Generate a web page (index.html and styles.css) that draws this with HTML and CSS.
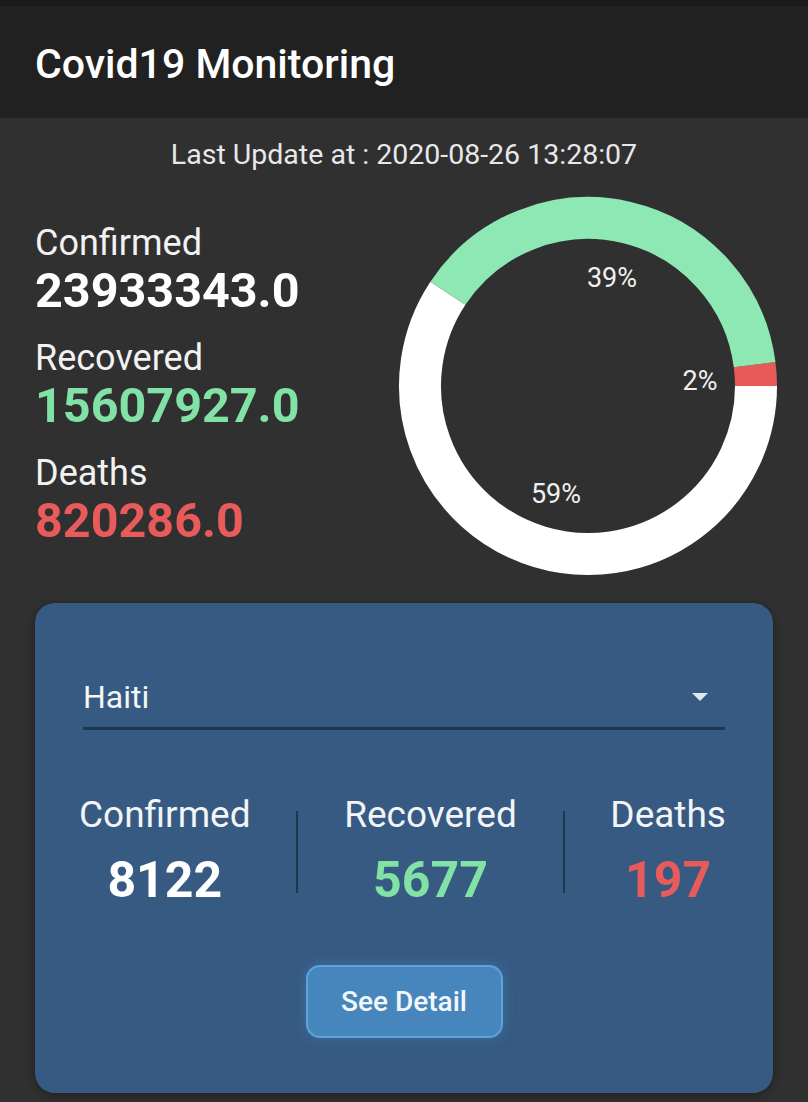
FILE: index.html
```html
<!DOCTYPE html>
<html lang="en">
<head>
<meta charset="utf-8">
<title>Covid19 Monitoring</title>
<link rel="stylesheet" href="styles.css">
</head>
<body>
<div class="status"></div>
<header class="appbar">
  <h1 class="title">Covid19 Monitoring</h1>
</header>
<main class="content">
  <p class="updated">Last Update at : 2020-08-26 13:28:07</p>
  <section class="overview">
    <div class="totals">
      <div class="total">
        <span class="label">Confirmed</span>
        <span class="value">23933343.0</span>
      </div>
      <div class="total">
        <span class="label">Recovered</span>
        <span class="value green">15607927.0</span>
      </div>
      <div class="total">
        <span class="label">Deaths</span>
        <span class="value red">820286.0</span>
      </div>
    </div>
    <svg class="donut" width="380" height="380" viewBox="0 0 380 380">
      <path class="seg seg-white" d="M 49.91 97.27 A 168 168 0 1 0 358 190"/>
      <path class="seg seg-red" d="M 358 190 A 168 168 0 0 0 356.63 168.60"/>
      <path class="seg seg-green" d="M 356.63 168.60 A 168 168 0 0 0 49.91 97.27"/>
      <text class="pct" x="214" y="91">39%</text>
      <text class="pct" x="302" y="194">2%</text>
      <text class="pct" x="158" y="307">59%</text>
    </svg>
  </section>
  <section class="card">
    <div class="select">
      <span class="select-value">Haiti</span>
      <span class="caret"></span>
    </div>
    <div class="stats">
      <div class="stat">
        <span class="stat-label">Confirmed</span>
        <span class="stat-value">8122</span>
      </div>
      <div class="divider"></div>
      <div class="stat">
        <span class="stat-label">Recovered</span>
        <span class="stat-value green">5677</span>
      </div>
      <div class="divider"></div>
      <div class="stat">
        <span class="stat-label">Deaths</span>
        <span class="stat-value red">197</span>
      </div>
    </div>
    <div class="actions">
      <button class="detail" type="button">See Detail</button>
    </div>
  </section>
</main>
</body>
</html>
```

FILE: styles.css
```css
* {
  box-sizing: border-box;
}

html, body {
  margin: 0;
  padding: 0;
}

body {
  background: #303030;
  font-family: Roboto, "Liberation Sans", sans-serif;
  color: #ffffff;
  width: 808px;
  min-height: 1102px;
}

.status {
  height: 6px;
  background: #1a1a1a;
}

.appbar {
  height: 112px;
  background: #212121;
  display: flex;
  align-items: center;
  padding: 4px 0 0 35px;
}

.title {
  margin: 0;
  font-size: 41px;
  line-height: 48px;
  font-weight: 500;
  color: #ffffff;
}

.content {
  padding-top: 21px;
}

.updated {
  margin: 0;
  text-align: center;
  font-size: 28.5px;
  line-height: 31px;
  color: #e8e8e8;
}

.overview {
  margin-top: 26px;
  display: flex;
  justify-content: space-between;
  align-items: flex-start;
  padding: 0 30px 0 35px;
}

.totals {
  margin-top: 27px;
  display: flex;
  flex-direction: column;
  gap: 22px;
}

.total {
  display: flex;
  flex-direction: column;
  gap: 3px;
}

.label {
  font-size: 36px;
  line-height: 40px;
  color: #f2f2f2;
}

.value {
  font-size: 48.5px;
  line-height: 50px;
  font-weight: 700;
  color: #ffffff;
}

.donut {
  display: block;
}

.seg {
  fill: none;
  stroke-width: 42;
  stroke-linecap: butt;
}

.seg-white {
  stroke: #ffffff;
}

.seg-red {
  stroke: #e85a58;
}

.seg-green {
  stroke: #8de8b4;
}

.pct {
  font-family: Roboto, "Liberation Sans", sans-serif;
  font-size: 27px;
  fill: #f0f0f0;
  text-anchor: middle;
}

.card {
  margin: 27px 35px 0 35px;
  background: #365a82;
  border-radius: 20px;
  padding: 75px 48px 55px 48px;
  box-shadow: 0 2px 8px rgba(0, 0, 0, 0.35);
}

.select {
  display: flex;
  align-items: center;
  justify-content: space-between;
  padding-bottom: 11px;
  border-bottom: 3px solid #1d3653;
}

.select-value {
  font-size: 32px;
  line-height: 38px;
  color: #f4f6f8;
}

.caret {
  width: 0;
  height: 0;
  border-left: 8px solid transparent;
  border-right: 8px solid transparent;
  border-top: 8px solid #dfe6ee;
  margin-right: 17px;
}

.stats {
  margin-top: 64px;
  display: flex;
  justify-content: space-between;
  align-items: center;
  margin-left: -4px;
  margin-right: -1px;
}

.stat {
  display: flex;
  flex-direction: column;
  align-items: center;
  gap: 15px;
}

.stat-label {
  font-size: 37px;
  line-height: 42px;
  color: #f2f4f6;
}

.stat-value {
  font-size: 50px;
  line-height: 58px;
  font-weight: 700;
  color: #ffffff;
}

.green {
  color: #82e2a6;
}

.red {
  color: #e95b5b;
}

.divider {
  width: 2px;
  height: 82px;
  background: #1f3652;
}

.actions {
  margin-top: 56px;
  display: flex;
  justify-content: center;
}

.detail {
  width: 197px;
  height: 73px;
  border: 2px solid #5aa3dc;
  border-radius: 14px;
  background: #4786bd;
  color: #f3f7fb;
  font-family: Roboto, "Liberation Sans", sans-serif;
  font-size: 28px;
  font-weight: 500;
  box-shadow: 0 0 14px rgba(80, 150, 220, 0.35);
  padding: 0;
}
```
